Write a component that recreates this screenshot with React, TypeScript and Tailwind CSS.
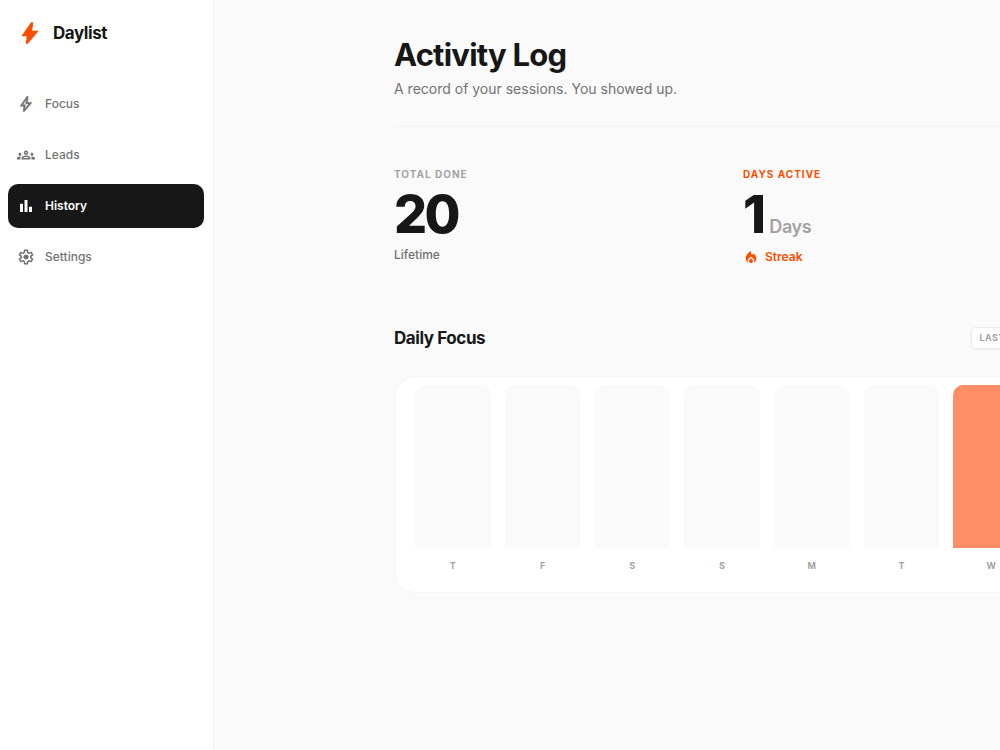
import type { ReactNode } from 'react'
import { MdOutlineGroups } from 'react-icons/md'

const PATHS = {
  boltFill: 'm320-80 40-280H160l360-520h80l-40 320h240L400-80h-80Z',
  bolt: 'm422-232 207-248H469l29-227-185 267h139l-30 208ZM320-80l40-280H160l360-520h80l-40 320h240L400-80h-80Zm151-390Z',
  chart: 'M640-160v-280h160v280H640Zm-240 0v-640h160v640H400Zm-240 0v-440h160v440H160Z',
  settings:
    'm370-80-16-128q-13-5-24.5-12T307-235l-119 50L78-375l103-78q-1-7-1-13.5v-27q0-6.5 1-13.5L78-585l110-190 119 50q11-8 23-15t24-12l16-128h220l16 128q13 5 24.5 12t22.5 15l119-50 110 190-103 78q1 7 1 13.5v27q0 6.5-2 13.5l103 78-110 190-118-50q-11 8-23 15t-24 12L590-80H370Zm70-80h79l14-106q31-8 57.5-23.5T639-327l99 41 39-68-86-65q5-14 7-29.5t2-31.5q0-16-2-31.5t-7-29.5l86-65-39-68-99 42q-22-23-48.5-38.5T533-694l-13-106h-79l-14 106q-31 8-57.5 23.5T321-633l-99-41-39 68 86 64q-5 15-7 30t-2 32q0 16 2 31t7 30l-86 65 39 68 99-42q22 23 48.5 38.5T427-266l13 106Zm42-180q58 0 99-41t41-99q0-58-41-99t-99-41q-59 0-99.5 41T342-480q0 58 40.5 99t99.5 41Zm-2-140Z',
  fire: 'M160-400q0-105 50-187t110-138q60-56 110-85.5l50-29.5v132q0 37 25 58.5t56 21.5q17 0 32.5-7t28.5-23l18-22q72 42 114 120.5T800-400q0 88-43 160.5T644-125q17-24 26.5-52.5T680-238q0-40-15-75.5T622-377L480-516 339-377q-29 29-44 64t-15 75q0 32 9.5 60.5T316-125q-70-42-113-114.5T160-400Zm320-4 85 83q17 17 26 38t9 45q0 49-35 83.5T480-120q-50 0-85-34.5T360-238q0-23 9-44.5t26-38.5l85-83Z',
}

function Icon({ name, className }: { name: keyof typeof PATHS; className: string }) {
  return (
    <svg viewBox="0 -960 960 960" fill="currentColor" className={className} aria-hidden="true">
      <path d={PATHS[name]} />
    </svg>
  )
}

const nav: { label: string; icon: ReactNode; active?: boolean }[] = [
  { label: 'Focus', icon: <Icon name="bolt" className="size-[18px] stroke-current stroke-[24]" /> },
  { label: 'Leads', icon: <MdOutlineGroups className="size-[18px]" /> },
  { label: 'History', icon: <Icon name="chart" className="size-[18px]" />, active: true },
  { label: 'Settings', icon: <Icon name="settings" className="size-[18px]" /> },
]

const days = [
  { day: 'T', done: 0 },
  { day: 'F', done: 0 },
  { day: 'S', done: 0 },
  { day: 'S', done: 0 },
  { day: 'M', done: 0 },
  { day: 'T', done: 0 },
  { day: 'W', done: 100 },
]

export default function App() {
  return (
    <div className="flex min-h-screen overflow-hidden bg-[#fafafa] font-['Inter',sans-serif] text-[#171717]">
      {/* Sidebar */}
      <aside className="w-[214px] shrink-0 border-r border-[#f0f0f0] bg-white pt-5 pr-[9px] pl-2">
        <div className="flex items-center gap-[10px] pl-[9px]">
          <Icon name="boltFill" className="size-[26px] text-[#ff4d00]" />
          <span className="text-[17px] leading-6 font-bold tracking-tight">Daylist</span>
        </div>

        <nav className="mt-9 flex flex-col gap-[7px]">
          {nav.map(({ label, icon, active }) => (
            <a
              key={label}
              href="#"
              className={
                active
                  ? 'flex h-11 items-center gap-[10px] rounded-[10px] bg-[#171717] px-[9px] text-[12px] font-semibold text-white'
                  : 'flex h-11 items-center gap-[10px] rounded-[10px] px-[9px] text-[12px] font-medium text-[#737373]'
              }
            >
              {icon}
              {label}
            </a>
          ))}
        </nav>
      </aside>

      <main className="min-w-0 flex-1 pt-9 pl-[180px]">
        <div className="max-w-[656px] min-w-[656px]">
          {/* Header */}
          <header className="border-b border-[#f3f3f3] pb-[27px]">
            <h1 className="text-[31px] leading-[38px] font-bold tracking-tight">Activity Log</h1>
            <p className="mt-[5px] text-[14px] leading-5 text-[#737373]">
              A record of your sessions. You showed up.
            </p>
          </header>

          {/* Stats */}
          <section className="mt-10 grid grid-cols-2 gap-[42px]">
            <div>
              <h2 className="text-[10px] leading-[14px] font-bold tracking-widest text-[#a3a3a3]">TOTAL DONE</h2>
              <p className="mt-2 text-[52px] leading-[52px] font-extrabold tracking-tighter">20</p>
              <p className="mt-[6px] text-[12px] leading-4 font-medium text-[#737373]">Lifetime</p>
            </div>
            <div>
              <h2 className="text-[10px] leading-[14px] font-bold tracking-widest text-[#ff4d00]">DAYS ACTIVE</h2>
              <p className="mt-2 flex items-baseline gap-[6px] text-[52px] leading-[52px] font-extrabold tracking-tighter">
                1<span className="text-[18px] leading-none font-semibold tracking-tight text-[#a3a3a3]">Days</span>
              </p>
              <p className="mt-[6px] flex items-center gap-[6px] text-[12px] leading-5 font-semibold text-[#ff4d00]">
                <Icon name="fire" className="size-4" />
                Streak
              </p>
            </div>
          </section>

          {/* Chart */}
          <section className="mt-[59px]">
            <div className="flex items-center justify-between">
              <h2 className="text-[17px] leading-6 font-bold tracking-tight">Daily Focus</h2>
              <span className="rounded-[5px] border border-[#ebebeb] bg-white px-[7px] text-[9px] leading-5 font-bold tracking-wider text-[#a3a3a3] shadow-xs">
                LAST 7 DAYS
              </span>
            </div>

            <div className="mt-[26px] flex gap-[14px] rounded-[22px] border border-[#f5f5f5] bg-white px-5 pt-2 pb-[19px]">
              {days.map(({ day, done }, i) => (
                <div key={i} className="flex flex-1 flex-col gap-[11px]">
                  <div className="flex h-[163px] items-end overflow-hidden rounded-t-[10px] bg-[#fafafa]">
                    <div className="w-full bg-[#ff8e66]" style={{ height: `${done}%` }} />
                  </div>
                  <span className="text-center text-[9px] leading-[14px] font-bold text-[#a3a3a3]">{day}</span>
                </div>
              ))}
            </div>
          </section>
        </div>
      </main>
    </div>
  )
}
